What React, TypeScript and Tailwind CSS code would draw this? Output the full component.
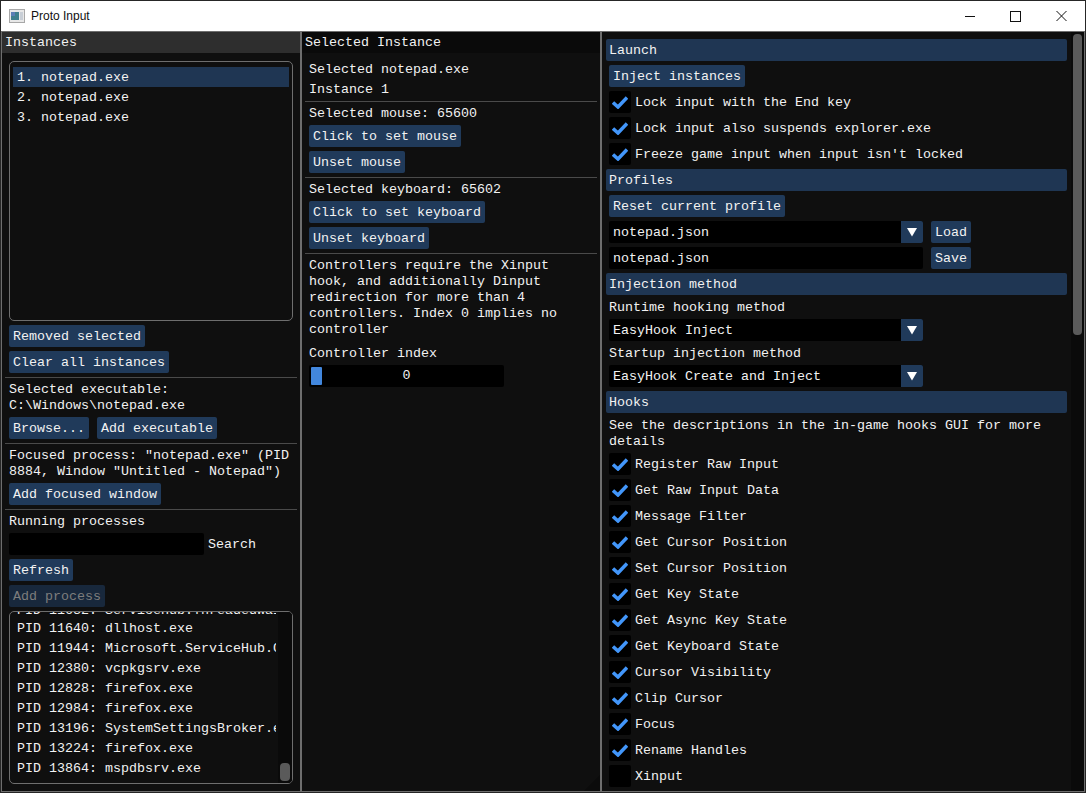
import { ReactNode } from "react"

const hooks = [
  "Register Raw Input",
  "Get Raw Input Data",
  "Message Filter",
  "Get Cursor Position",
  "Set Cursor Position",
  "Get Key State",
  "Get Async Key State",
  "Get Keyboard State",
  "Cursor Visibility",
  "Clip Cursor",
  "Focus",
  "Rename Handles",
]

const processes = [
  "PID 11640: dllhost.exe",
  "PID 11944: Microsoft.ServiceHub.Controller.exe",
  "PID 12380: vcpkgsrv.exe",
  "PID 12828: firefox.exe",
  "PID 12984: firefox.exe",
  "PID 13196: SystemSettingsBroker.exe",
  "PID 13224: firefox.exe",
  "PID 13864: mspdbsrv.exe",
]

function Btn({ children, disabled }: { children: ReactNode; disabled?: boolean }) {
  return (
    <div
      className={`h-[22px] w-fit shrink-0 rounded-[2px] px-1 leading-[24px] whitespace-nowrap ${
        disabled ? "bg-[#18283c] text-[#7d7d7d]" : "bg-[#203a5a]"
      }`}
    >
      {children}
    </div>
  )
}

function Sep() {
  return <div className="-mx-[4px] -mb-px h-px shrink-0 bg-[#4a4a4a]" />
}

function Text({ children }: { children: ReactNode }) {
  return <div className="h-4 shrink-0 leading-[18px] whitespace-nowrap">{children}</div>
}

function Check({ label, on = true }: { label: string; on?: boolean }) {
  return (
    <div className="flex h-[22px] shrink-0 gap-1">
      <div className="flex h-[22px] w-[22px] items-center justify-center rounded-[2px] bg-black">
        {on && (
          <svg width="16" height="13" viewBox="0 0 16 13">
            <path d="M1 6.5 L6 11 L15 1.5" fill="none" stroke="#4296fa" strokeWidth="3.5" />
          </svg>
        )}
      </div>
      <span className="leading-[24px]">{label}</span>
    </div>
  )
}

function Header({ children }: { children: ReactNode }) {
  return (
    <div className="-ml-[3px] mr-[4px] h-[22px] shrink-0 rounded-[2px] bg-[#1f3653] pl-[3px] leading-[24px]">
      {children}
    </div>
  )
}

function Combo({ value }: { value: string }) {
  return (
    <div className="flex h-[22px] w-[314px] shrink-0 rounded-[2px] bg-black">
      <span className="flex-1 pl-1 leading-[24px]">{value}</span>
      <div className="flex w-[22px] items-center justify-center rounded-r-[2px] bg-[#203a5a]">
        <svg width="12" height="10" viewBox="0 0 12 10">
          <path d="M1 1 H11 L6 9.5 Z" fill="#fff" />
        </svg>
      </div>
    </div>
  )
}

function TitleBar() {
  return (
    <div className="flex h-[30px] shrink-0 items-center bg-white text-black">
      <svg className="ml-[8px]" width="16" height="14" viewBox="0 0 16 14">
        <rect x="0.5" y="0.5" width="15" height="13" fill="#e8e8e8" stroke="#a8a8a8" />
        <rect x="2" y="3" width="8" height="8" fill="#3f7f8c" />
        <rect x="2" y="3" width="4" height="4" fill="#5b7fb5" />
        <rect x="11" y="3" width="3" height="8" fill="#c8ced6" />
      </svg>
      <span className="ml-[6px] font-['Liberation_Sans',sans-serif] text-[12px] text-[#111]">Proto Input</span>
      <div className="ml-auto flex items-center">
        <svg width="46" height="30" viewBox="0 0 46 30">
          <path d="M18 15.5 H28" stroke="#111" />
        </svg>
        <svg width="46" height="30" viewBox="0 0 46 30">
          <rect x="17.5" y="10.5" width="10" height="10" fill="none" stroke="#111" />
        </svg>
        <svg width="46" height="30" viewBox="0 0 46 30">
          <path d="M17.5 10 L27.5 20 M27.5 10 L17.5 20" stroke="#111" />
        </svg>
      </div>
    </div>
  )
}

export default function App() {
  return (
    <div className="flex h-[793px] w-[1086px] flex-col overflow-hidden border border-[#262626] bg-white font-['Liberation_Mono',monospace] text-[13.33px] text-[#f2f2f2]">
      <TitleBar />
      <div className="flex min-h-0 flex-1 gap-[2px] bg-[#6e6e6e] p-px">
        {/* instances */}
        <div className="flex w-[298px] flex-col bg-[#0f0f0f]">
          <div className="h-[21px] shrink-0 bg-[#2e2e2e] pl-[3px] leading-[22px]">Instances</div>
          <div className="flex flex-col gap-1 px-[7px] pt-2">
            <div className="flex h-[260px] shrink-0 flex-col rounded-[5px] border border-[#6e6e6e] px-[3px] pt-[5px]">
              <div className="h-5 bg-[#1f3653] pl-1 leading-[22px]">1. notepad.exe</div>
              <div className="h-5 pl-1 leading-[22px]">2. notepad.exe</div>
              <div className="h-5 pl-1 leading-[22px]">3. notepad.exe</div>
            </div>
            <Btn>Removed selected</Btn>
            <Btn>Clear all instances</Btn>
            <Sep />
            <div className="flex flex-col">
              <Text>Selected executable:</Text>
              <Text>C:\Windows\notepad.exe</Text>
            </div>
            <div className="flex gap-2">
              <Btn>Browse...</Btn>
              <Btn>Add executable</Btn>
            </div>
            <Sep />
            <div className="flex flex-col">
              <Text>Focused process: "notepad.exe" (PID</Text>
              <Text>8884, Window "Untitled - Notepad")</Text>
            </div>
            <Btn>Add focused window</Btn>
            <Sep />
            <Text>Running processes</Text>
            <div className="flex h-[22px] shrink-0 gap-1">
              <div className="h-[22px] w-[195px] rounded-[2px] bg-black" />
              <span className="leading-[24px]">Search</span>
            </div>
            <Btn>Refresh</Btn>
            <Btn disabled>Add process</Btn>
            <div className="flex h-[173px] shrink-0 overflow-hidden rounded-[5px] border border-[#6e6e6e]">
              <div className="min-w-0 flex-1 overflow-hidden pl-[7px]">
                <div className="-mt-[14px] h-5 leading-[25px] whitespace-nowrap">PID 11632: ServiceHub.ThreadedWaitDialog.exe</div>
                {processes.map((p) => (
                  <div key={p} className="h-5 leading-[22px] whitespace-nowrap">
                    {p}
                  </div>
                ))}
              </div>
              <div className="ml-[2px] flex w-[14px] shrink-0 flex-col justify-end bg-[#0a0a0a] pb-[2px] pl-[2px] pr-[2px]">
                <div className="h-[18px] rounded-[4px] bg-[#5a5a5a]" />
              </div>
            </div>
          </div>
        </div>

        {/* selected instance */}
        <div className="relative flex w-[298px] flex-col bg-[#0f0f0f]">
          <div className="h-[21px] shrink-0 bg-[#0a0a0a] pl-[3px] leading-[22px]">Selected Instance</div>
          <div className="flex flex-col gap-1 px-[7px] pt-2">
            <Text>Selected notepad.exe</Text>
            <Text>Instance 1</Text>
            <Sep />
            <Text>Selected mouse: 65600</Text>
            <Btn>Click to set mouse</Btn>
            <Btn>Unset mouse</Btn>
            <Sep />
            <Text>Selected keyboard: 65602</Text>
            <Btn>Click to set keyboard</Btn>
            <Btn>Unset keyboard</Btn>
            <Sep />
            <div className="flex flex-col">
              <Text>Controllers require the Xinput</Text>
              <Text>hook, and additionally Dinput</Text>
              <Text>redirection for more than 4</Text>
              <Text>controllers. Index 0 implies no</Text>
              <Text>controller</Text>
            </div>
            <div className="mt-1">
              <Text>Controller index</Text>
            </div>
            <div className="relative flex h-[22px] w-[195px] items-center justify-center rounded-[2px] bg-black">
              <div className="absolute left-[2px] top-[2px] h-[18px] w-[11px] rounded-[1px] bg-[#4287dd]" />
              <span>0</span>
            </div>
          </div>
          <svg className="absolute bottom-0 right-0" width="16" height="16" viewBox="0 0 16 16">
            <path d="M16 0 V16 H0 Z" fill="#0b0b0b" />
          </svg>
        </div>

        {/* settings */}
        <div className="flex min-w-0 flex-1 bg-[#0f0f0f]">
          <div className="flex min-w-0 flex-1 flex-col gap-1 overflow-hidden pl-[7px] pt-[7px]">
            <Header>Launch</Header>
            <Btn>Inject instances</Btn>
            <Check label="Lock input with the End key" />
            <Check label="Lock input also suspends explorer.exe" />
            <Check label="Freeze game input when input isn't locked" />
            <Header>Profiles</Header>
            <Btn>Reset current profile</Btn>
            <div className="flex gap-2">
              <Combo value="notepad.json" />
              <Btn>Load</Btn>
            </div>
            <div className="flex gap-2">
              <div className="h-[22px] w-[314px] rounded-[2px] bg-black pl-1 leading-[24px]">notepad.json</div>
              <Btn>Save</Btn>
            </div>
            <Header>Injection method</Header>
            <Text>Runtime hooking method</Text>
            <Combo value="EasyHook Inject" />
            <Text>Startup injection method</Text>
            <Combo value="EasyHook Create and Inject" />
            <Header>Hooks</Header>
            <div className="flex flex-col">
              <Text>See the descriptions in the in-game hooks GUI for more</Text>
              <Text>details</Text>
            </div>
            {hooks.map((h) => (
              <Check key={h} label={h} />
            ))}
            <Check label="Xinput" on={false} />
          </div>
          <div className="w-[13px] shrink-0 bg-[#0a0a0a] px-[2px] pt-[2px]">
            <div className="h-[301px] rounded-[4px] bg-[#5a5a5a]" />
          </div>
        </div>
      </div>
    </div>
  )
}
